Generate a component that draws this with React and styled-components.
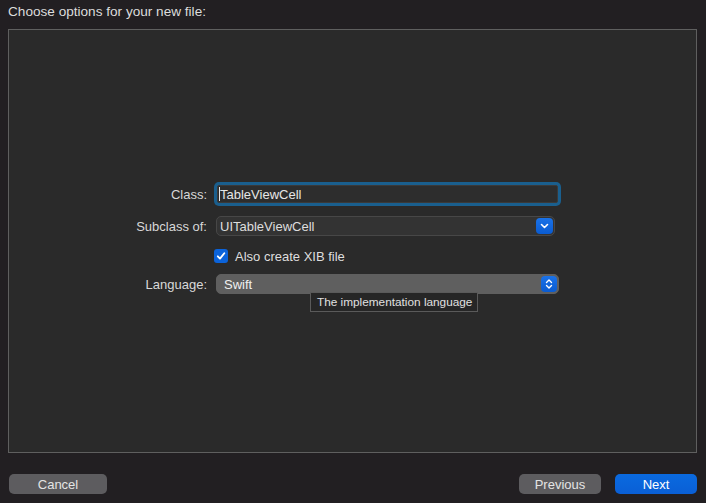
import React from "react";
import styled, { createGlobalStyle } from "styled-components";

const Global = createGlobalStyle`
  html, body { margin: 0; padding: 0; background: #221f22; }
  body { font-family: "Liberation Sans", Arial, sans-serif; font-size: 13px; color: #dddddd; }
  * { box-sizing: border-box; }
`;

const Window = styled.div`
  width: 706px;
  height: 503px;
  background: #221f22;
  display: flex;
  flex-direction: column;
  padding: 0 9px 0 8px;
`;

const Title = styled.div`
  height: 29px;
  padding-top: 4px;
  font-size: 13.6px;
  color: #dcdcdc;
  line-height: 16px;
`;

const Panel = styled.div`
  height: 424px;
  border: 1px solid #5f5f5f;
  background: #2a2a2a;
  padding-top: 151px;
  padding-left: 98px;
  display: flex;
  flex-direction: column;
`;

const Row = styled.div`
  display: flex;
  align-items: center;
  height: ${(p) => p.$h}px;
  margin-top: ${(p) => p.$top || 0}px;
  position: relative;
`;

const Label = styled.div`
  width: 100px;
  text-align: right;
  padding-right: 0px;
  color: #d8d8d8;
  font-size: 13px;
  margin-right: 8px;
`;

const TextField = styled.div`
  width: 341px;
  height: 18px;
  margin-left: 2px;
  background: #2d2d2d;
  border: 1px solid #3a3a3a;
  box-shadow: 0 0 0 3px #1a5f8e;
  border-radius: 2px;
  display: flex;
  align-items: center;
  padding-left: 1px;
  color: #e6e6e6;
  font-size: 13px;
`;

const Caret = styled.span`
  display: inline-block;
  width: 1px;
  height: 14px;
  background: #e8e8e8;
`;

const Popup = styled.div`
  width: ${(p) => p.$w}px;
  height: 20px;
  margin-left: ${(p) => p.$ml || 0}px;
  border-radius: 5px;
  background: ${(p) => (p.$light ? "#5f5f5f" : "#333333")};
  border: 1px solid ${(p) => (p.$light ? "#5f5f5f" : "#474747")};
  display: flex;
  align-items: center;
  justify-content: space-between;
  padding-left: ${(p) => p.$pl || 3}px;
  padding-right: 1px;
  color: ${(p) => (p.$light ? "#f0f0f0" : "#dedede")};
  font-size: 13px;
  font-weight: ${(p) => (p.$light ? 500 : 400)};
`;

const Stepper = styled.div`
  width: ${(p) => p.$w}px;
  height: 16px;
  border-radius: 4px;
  background: linear-gradient(#1a72e8, #0a5bd0);
  display: flex;
  align-items: center;
  justify-content: center;
`;

const Check = styled.div`
  width: 14px;
  height: 14px;
  border-radius: 3px;
  background: #0b63da;
  display: flex;
  align-items: center;
  justify-content: center;
  margin-left: -1px;
  margin-right: 7px;
`;

const CheckText = styled.span`
  color: #dedede;
  font-size: 13px;
`;

const Spacer = styled.div`
  width: 108px;
`;

const Tooltip = styled.div`
  position: absolute;
  left: 203px;
  top: 18px;
  width: 168px;
  height: 20px;
  background: #262626;
  border: 1px solid #5a5a5a;
  color: #e0e0e0;
  font-size: 11.8px;
  display: flex;
  align-items: center;
  padding-left: 6px;
  z-index: 2;
`;

const Footer = styled.div`
  display: flex;
  align-items: center;
  padding-top: 21px;
  padding-left: 1px;
  gap: 14px;
`;

const Button = styled.div`
  width: ${(p) => p.$w}px;
  height: 20px;
  border-radius: 5px;
  background: ${(p) => (p.$primary ? "linear-gradient(#0a6ae0, #0a5fd6)" : "#5d5c5f")};
  color: ${(p) => (p.$primary ? "#ffffff" : "#e4e4e4")};
  font-size: 13px;
  line-height: 19px;
  display: flex;
  align-items: center;
  justify-content: center;
  margin-left: ${(p) => (p.$push ? "auto" : "0")};
`;

export default function App() {
  return (
    <>
      <Global />
      <Window>
        <Title>Choose options for your new file:</Title>
        <Panel>
          <Row $h={26}>
            <Label>Class:</Label>
            <TextField>
              <Caret />
              TableViewCell
            </TextField>
          </Row>
          <Row $h={20} $top={9}>
            <Label>Subclass of:</Label>
            <Popup $w={339} $ml={1} $pl={3}>
              UITableViewCell
              <Stepper $w={17}>
                <svg width="9" height="6" viewBox="0 0 9 6">
                  <path d="M1.5 1.5 L4.5 4.5 L7.5 1.5" fill="none" stroke="#fff" strokeWidth="1.6" strokeLinecap="round" strokeLinejoin="round" />
                </svg>
              </Stepper>
            </Popup>
          </Row>
          <Row $h={20} $top={10}>
            <Spacer />
            <Check>
              <svg width="10" height="10" viewBox="0 0 10 10">
                <path d="M1.8 5.3 L4 7.6 L8.3 2.2" fill="none" stroke="#fff" strokeWidth="1.8" strokeLinecap="round" strokeLinejoin="round" />
              </svg>
            </Check>
            <CheckText>Also create XIB file</CheckText>
          </Row>
          <Row $h={20} $top={8}>
            <Label>Language:</Label>
            <Popup $w={343} $ml={1} $light $pl={7}>
              Swift
              <Stepper $w={16}>
                <svg width="8" height="12" viewBox="0 0 8 12">
                  <path d="M1.5 4.5 L4 2 L6.5 4.5 M1.5 7.5 L4 10 L6.5 7.5" fill="none" stroke="#fff" strokeWidth="1.4" strokeLinecap="round" strokeLinejoin="round" />
                </svg>
              </Stepper>
            </Popup>
            <Tooltip>The implementation language</Tooltip>
          </Row>
        </Panel>
        <Footer>
          <Button $w={98}>Cancel</Button>
          <Button $w={82} $push>Previous</Button>
          <Button $w={82} $primary>Next</Button>
        </Footer>
      </Window>
    </>
  );
}
